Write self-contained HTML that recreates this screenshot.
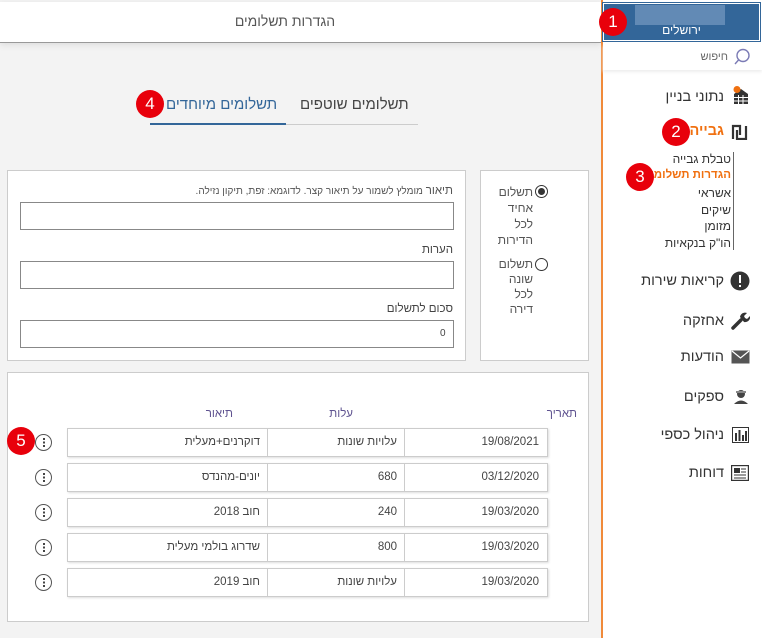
<!DOCTYPE html>
<html><head><meta charset="utf-8"><style>
*{box-sizing:border-box;margin:0;padding:0}
body{width:762px;height:638px;overflow:hidden;background:#f3f3f3;font-family:"Liberation Sans","Noto Sans CJK SC",sans-serif;color:#444;position:relative;font-size:12px}
.a{position:absolute}
.r{direction:rtl;text-align:right;white-space:nowrap}
.badge{position:absolute;width:28px;height:28px;border-radius:50%;background:#e8000b;color:#fff;font-size:17px;text-align:center;line-height:28px}
.inp{position:absolute;left:20px;width:434px;height:28px;border:1px solid #888;background:#fff}
.row{position:absolute;left:67px;width:481px;height:29px;border:1px solid #ccc;background:#fff;box-shadow:1px 1px 2px #ddd}
.row div{position:absolute;top:0;height:27px;line-height:27px;direction:rtl;text-align:right;font-size:11.5px;color:#444}
.dots{position:absolute;left:35px;width:17px;height:17px;border:1.3px solid #555;border-radius:50%}
.dots:after{content:"";position:absolute;left:6.5px;top:3px;width:2px;height:2px;background:#444;box-shadow:0 3.5px 0 #444,0 7px 0 #444}
.nav{position:absolute;right:38px;font-size:14.5px;color:#333;direction:rtl;white-space:nowrap}
.sub{position:absolute;right:31px;font-size:12px;color:#333;direction:rtl;white-space:nowrap}
</style></head><body>
<div class="a" style="left:0;top:2px;width:601px;height:41px;background:#fff;border-bottom:1px solid #999;box-shadow:0 2px 6px #ddd"></div>
<div class="a r" style="left:0;width:570px;top:13px;text-align:center;font-size:14px;color:#555">הגדרות תשלומים</div>
<div class="a" style="left:601px;top:0;width:161px;height:638px;background:#fff;border-left:2px solid #f08a3a"></div>
<div class="a" style="left:603px;top:3px;width:157px;height:38px;background:#336699;border:1px solid #fff;outline:1px solid #336699"></div>
<div class="a" style="left:635px;top:5px;width:90px;height:20px;background:#6e93bb;opacity:.8"></div>
<div class="a r" style="left:603px;width:157px;top:23px;text-align:center;color:#fff;font-size:12px">ירושלים</div>
<div class="a" style="left:603px;top:44px;width:159px;height:26px;box-shadow:0 2px 3px #eee"></div>
<div class="a r" style="right:34px;top:51px;font-size:11px;color:#666">חיפוש</div>
<svg class="a" style="left:733px;top:48px" width="20" height="18"><circle cx="10" cy="7.5" r="6" fill="none" stroke="#7b7bb5" stroke-width="1.4"/><line x1="5.5" y1="12" x2="2" y2="16" stroke="#7b7bb5" stroke-width="1.4"/></svg>
<svg class="a" style="left:732px;top:86px" width="20" height="20"><path d="M2 8 L9 3 L16 8 Z" fill="#333"/><rect x="2" y="8" width="14" height="10" fill="#333"/><g stroke="#fff" stroke-width="1"><line x1="2" y1="11.5" x2="16" y2="11.5"/><line x1="2" y1="15" x2="16" y2="15"/><line x1="6.5" y1="9" x2="6.5" y2="18"/><line x1="11" y1="9" x2="11" y2="18"/></g><circle cx="5" cy="3.5" r="3.5" fill="#f07010"/></svg>
<div class="nav" style="top:89px">נתוני בניין</div>
<svg class="a" style="left:731px;top:124px" width="18" height="16"><path d="M2 15V2h7v9M6 6v9h9V2" fill="none" stroke="#333" stroke-width="2.2"/></svg>
<div class="nav" style="top:123px;color:#f07010;font-weight:bold">גבייה</div>
<div class="a" style="left:733px;top:152px;width:1px;height:98px;background:#666"></div>
<div class="sub" style="top:152px">טבלת גבייה</div>
<div class="sub" style="top:169px;color:#f07010;font-weight:bold;font-size:11.5px">הגדרות תשלומים</div>
<div class="sub" style="top:186px">אשראי</div>
<div class="sub" style="top:203px">שיקים</div>
<div class="sub" style="top:219px">מזומן</div>
<div class="sub" style="top:236px">הו"ק בנקאיות</div>
<svg class="a" style="left:730px;top:271px" width="20" height="20"><circle cx="10" cy="10" r="9.5" fill="#333"/><rect x="9" y="4" width="2" height="8" fill="#fff"/><rect x="9" y="14" width="2" height="2" fill="#fff"/></svg>
<div class="nav" style="top:273px">קריאות שירות</div>
<svg class="a" style="left:730px;top:311px" width="20" height="20"><path d="M3 17 L11 9" stroke="#333" stroke-width="3.5" stroke-linecap="round"/><path d="M10 6a5 5 0 0 1 7-4l-3 3 1 2 2 1 3-3a5 5 0 0 1-6 6z" fill="#333"/></svg>
<div class="nav" style="top:313px">אחזקה</div>
<svg class="a" style="left:731px;top:350px" width="19" height="14"><rect x="0.5" y="0.5" width="18" height="13" fill="#555"/><path d="M1 1 L9.5 8 L18 1" fill="none" stroke="#fff" stroke-width="1.2"/></svg>
<div class="nav" style="top:349px">הודעות</div>
<svg class="a" style="left:733px;top:388px" width="16" height="18"><circle cx="8" cy="6" r="4" fill="#444"/><rect x="3" y="3" width="10" height="2" fill="#888"/><path d="M1 16 Q8 9 15 16 Z" fill="#444"/></svg>
<div class="nav" style="top:389px">ספקים</div>
<svg class="a" style="left:732px;top:427px" width="17" height="16"><rect x="0.5" y="0.5" width="16" height="15" fill="#fff" stroke="#333"/><rect x="3" y="6" width="2" height="8" fill="#333"/><rect x="6.5" y="3" width="2" height="11" fill="#333"/><rect x="10" y="8" width="2" height="6" fill="#333"/><rect x="13" y="4" width="2" height="10" fill="#333"/></svg>
<div class="nav" style="top:427px">ניהול כספי</div>
<svg class="a" style="left:731px;top:465px" width="18" height="16"><rect x="0.5" y="0.5" width="17" height="15" fill="#fff" stroke="#333" stroke-width="1.4"/><rect x="3" y="3" width="6" height="5" fill="#333"/><g stroke="#333"><line x1="10" y1="4" x2="15" y2="4"/><line x1="10" y1="7" x2="15" y2="7"/><line x1="3" y1="10" x2="15" y2="10"/><line x1="3" y1="13" x2="15" y2="13"/></g></svg>
<div class="nav" style="top:465px">דוחות</div>
<div class="a r" style="left:300px;top:96px;font-size:15px;color:#444">תשלומים שוטפים</div>
<div class="a r" style="left:166px;top:96px;font-size:15px;color:#336699">תשלומים מיוחדים</div>
<div class="a" style="left:286px;top:124px;width:132px;height:1px;background:#ccc"></div>
<div class="a" style="left:150px;top:123px;width:136px;height:2px;background:#336699"></div>
<div class="a" style="left:7px;top:170px;width:459px;height:191px;background:#fff;border:1px solid #ccc"></div>
<div class="a r" style="right:309px;top:185px;font-size:10px;color:#555"><span style="font-size:11.5px">תיאור</span> מומלץ לשמור על תיאור קצר. לדוגמא: זפת, תיקון נזילה.</div>
<div class="inp" style="top:202px"></div>
<div class="a r" style="right:309px;top:244px;font-size:11.5px">הערות</div>
<div class="inp" style="top:261px"></div>
<div class="a r" style="right:309px;top:303px;font-size:11.5px">סכום לתשלום</div>
<div class="inp" style="top:320px"></div>
<div class="a" style="left:440px;top:328px;font-size:10px">0</div>
<div class="a" style="left:480px;top:170px;width:109px;height:191px;background:#fff;border:1px solid #ccc"></div>
<div class="a" style="left:535px;top:185px;width:13px;height:13px;border:1.2px solid #333;border-radius:50%"></div>
<div class="a" style="left:538px;top:188px;width:7px;height:7px;background:#333;border-radius:50%"></div>
<div class="a r" style="right:229px;top:184px;font-size:12px;line-height:16px;color:#555">תשלום<br>אחיד<br>לכל<br>הדירות</div>
<div class="a" style="left:535px;top:258px;width:13px;height:13px;border:1.2px solid #333;border-radius:50%"></div>
<div class="a r" style="right:229px;top:257px;font-size:12px;line-height:15px;color:#555">תשלום<br>שונה<br>לכל<br>דירה</div>
<div class="a" style="left:7px;top:372px;width:582px;height:250px;background:#fff;border:1px solid #ccc"></div>
<div class="a r" style="right:185px;top:408px;font-size:11.5px;color:#5f5390">תאריך</div>
<div class="a r" style="right:409px;top:408px;font-size:11.5px;color:#5f5390">עלות</div>
<div class="a r" style="right:529px;top:408px;font-size:11.5px;color:#5f5390">תיאור</div>
<div class="row" style="top:428px"><div style="right:0;width:142px;padding-right:8px">19/08/2021</div><div style="right:142px;width:139px;padding-right:7px;border-right:1px solid #ccc">עלויות שונות</div><div style="left:0;width:200px;padding-right:7px;border-right:1px solid #ccc">דוקרנים+מעלית</div></div>
<div class="row" style="top:463px"><div style="right:0;width:142px;padding-right:8px">03/12/2020</div><div style="right:142px;width:139px;padding-right:7px;border-right:1px solid #ccc">680</div><div style="left:0;width:200px;padding-right:7px;border-right:1px solid #ccc">יונים-מהנדס</div></div>
<div class="row" style="top:498px"><div style="right:0;width:142px;padding-right:8px">19/03/2020</div><div style="right:142px;width:139px;padding-right:7px;border-right:1px solid #ccc">240</div><div style="left:0;width:200px;padding-right:7px;border-right:1px solid #ccc">חוב 2018</div></div>
<div class="row" style="top:533px"><div style="right:0;width:142px;padding-right:8px">19/03/2020</div><div style="right:142px;width:139px;padding-right:7px;border-right:1px solid #ccc">800</div><div style="left:0;width:200px;padding-right:7px;border-right:1px solid #ccc">שדרוג בולמי מעלית</div></div>
<div class="row" style="top:568px"><div style="right:0;width:142px;padding-right:8px">19/03/2020</div><div style="right:142px;width:139px;padding-right:7px;border-right:1px solid #ccc">עלויות שונות</div><div style="left:0;width:200px;padding-right:7px;border-right:1px solid #ccc">חוב 2019</div></div>
<div class="dots" style="top:434px"></div>
<div class="dots" style="top:469px"></div>
<div class="dots" style="top:504px"></div>
<div class="dots" style="top:539px"></div>
<div class="dots" style="top:574px"></div>
<div class="badge" style="left:599px;top:8px">1</div>
<div class="badge" style="left:662px;top:118px">2</div>
<div class="badge" style="left:626px;top:163px">3</div>
<div class="badge" style="left:136px;top:90px">4</div>
<div class="badge" style="left:7px;top:427px">5</div>
</body></html>
